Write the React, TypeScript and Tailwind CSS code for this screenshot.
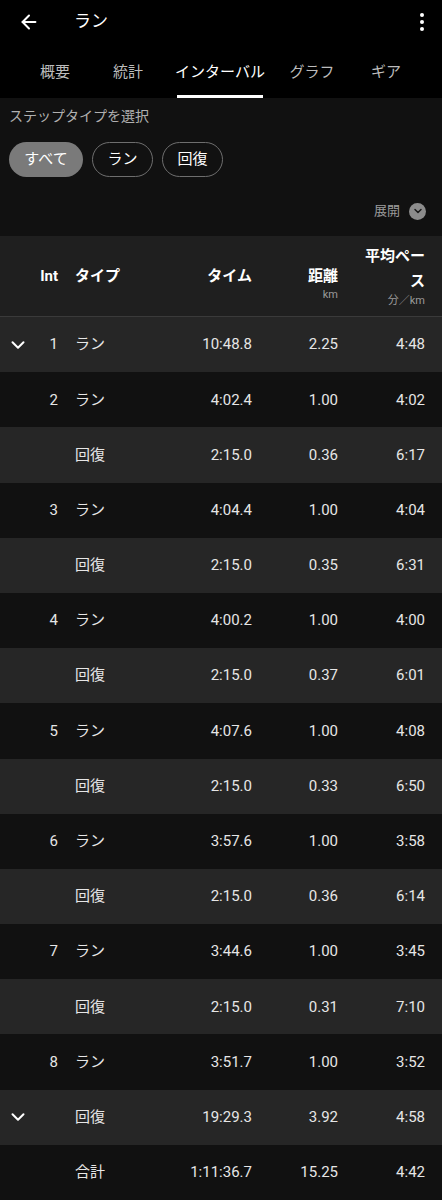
import { ArrowLeft, ChevronDown } from "lucide-react";

type Row = {
  int?: string;
  type: string;
  time: string;
  dist: string;
  pace: string;
  chevron?: boolean;
  light?: boolean;
};

const rows: Row[] = [
  { int: "1", type: "ラン", time: "10:48.8", dist: "2.25", pace: "4:48", chevron: true, light: true },
  { int: "2", type: "ラン", time: "4:02.4", dist: "1.00", pace: "4:02" },
  { type: "回復", time: "2:15.0", dist: "0.36", pace: "6:17", light: true },
  { int: "3", type: "ラン", time: "4:04.4", dist: "1.00", pace: "4:04" },
  { type: "回復", time: "2:15.0", dist: "0.35", pace: "6:31", light: true },
  { int: "4", type: "ラン", time: "4:00.2", dist: "1.00", pace: "4:00" },
  { type: "回復", time: "2:15.0", dist: "0.37", pace: "6:01", light: true },
  { int: "5", type: "ラン", time: "4:07.6", dist: "1.00", pace: "4:08" },
  { type: "回復", time: "2:15.0", dist: "0.33", pace: "6:50", light: true },
  { int: "6", type: "ラン", time: "3:57.6", dist: "1.00", pace: "3:58" },
  { type: "回復", time: "2:15.0", dist: "0.36", pace: "6:14", light: true },
  { int: "7", type: "ラン", time: "3:44.6", dist: "1.00", pace: "3:45" },
  { type: "回復", time: "2:15.0", dist: "0.31", pace: "7:10", light: true },
  { int: "8", type: "ラン", time: "3:51.7", dist: "1.00", pace: "3:52" },
  { type: "回復", time: "19:29.3", dist: "3.92", pace: "4:58", chevron: true, light: true },
  { type: "合計", time: "1:11:36.7", dist: "15.25", pace: "4:42" },
];

const tabs = [
  { label: "概要", w: "w-[74px]" },
  { label: "統計", w: "w-[72px]" },
  { label: "インターバル", w: "w-[112px]", active: true },
  { label: "グラフ", w: "w-[72px]" },
  { label: "ギア", w: "w-[76px]" },
];

function DataRow({ r }: { r: Row }) {
  return (
    <div
      className={`flex h-[55.2px] items-center text-[15px] text-[#e6e6e6] ${
        r.light ? "bg-[#262626]" : "bg-[#111111]"
      }`}
    >
      <div className="flex w-[36px] justify-center">
        {r.chevron && <ChevronDown size={22} strokeWidth={2.2} className="text-white" />}
      </div>
      <div className="w-[22px] text-right">{r.int}</div>
      <div className="ml-[17px] w-[80px]">{r.type}</div>
      <div className="w-[97px] text-right">{r.time}</div>
      <div className="w-[86px] text-right">{r.dist}</div>
      <div className="w-[87px] text-right">{r.pace}</div>
    </div>
  );
}

export default function App() {
  return (
    <div
      className="w-[442px] bg-[#111111] text-white"
      style={{ fontFamily: "Roboto, 'Noto Sans CJK JP', sans-serif" }}
    >
      {/* App bar */}
      <div className="flex h-[42px] items-center bg-black pl-[18px] pr-[12px] pt-[2px]">
        <ArrowLeft size={22} strokeWidth={2.2} className="text-white" />
        <span className="ml-[34px] text-[17px]">ラン</span>
        <div className="ml-auto flex flex-col items-center gap-[3px] px-[6px]">
          <span className="h-[4px] w-[4px] rounded-sm bg-white" />
          <span className="h-[4px] w-[4px] rounded-sm bg-white" />
          <span className="h-[4px] w-[4px] rounded-sm bg-white" />
        </div>
      </div>

      {/* Tabs */}
      <div className="flex h-[56px] bg-black pl-[18px]">
        {tabs.map((t) => (
          <div key={t.label} className={`flex flex-col items-center justify-end ${t.w}`}>
            <span
              className={`mb-[12px] whitespace-nowrap text-[15px] ${
                t.active ? "text-white" : "text-[#bcbcbc]"
              }`}
            >
              {t.label}
            </span>
            <span className={`h-[3px] w-[86px] ${t.active ? "bg-white" : "bg-transparent"}`} />
          </div>
        ))}
      </div>

      {/* Filter */}
      <div className="px-[9px] pt-[8px]">
        <div className="text-[14px] leading-[20px] text-[#b0b0b0]">ステップタイプを選択</div>
        <div className="mt-[16px] flex gap-[9px]">
          <span className="flex h-[35px] w-[74px] items-center justify-center rounded-full bg-[#7a7a7a] text-[15px]">
            すべて
          </span>
          <span className="flex h-[35px] w-[61px] items-center justify-center rounded-full border border-[#6e6e6e] text-[15px]">
            ラン
          </span>
          <span className="flex h-[35px] w-[61px] items-center justify-center rounded-full border border-[#6e6e6e] text-[15px]">
            回復
          </span>
        </div>
        <div className="flex h-[59px] items-center justify-end pr-[7px] pt-[9px]">
          <span className="text-[13px] text-[#9c9c9c]">展開</span>
          <span className="ml-[9px] flex h-[17px] w-[17px] items-center justify-center rounded-full bg-[#8c8c8c]">
            <ChevronDown size={12} strokeWidth={3} className="text-[#1a1a1a]" />
          </span>
        </div>
      </div>

      {/* Table header */}
      <div className="flex h-[81px] items-center border-b border-[#3a3a3a] bg-[#1f1f1f] text-[15px] font-bold">
        <div className="w-[36px]" />
        <div className="w-[22px] text-right">Int</div>
        <div className="ml-[17px] w-[80px]">タイプ</div>
        <div className="w-[97px] text-right">タイム</div>
        <div className="flex w-[86px] flex-col items-end pt-[16px]">
          <span>距離</span>
          <span className="text-[11px] font-normal leading-[16px] text-[#9a9a9a]">km</span>
        </div>
        <div className="flex w-[87px] flex-col items-end">
          <span className="w-[66px] text-right leading-[25px]">平均ペース</span>
          <span className="text-[11px] font-normal leading-[14px] text-[#9a9a9a]">分／km</span>
        </div>
      </div>

      {rows.map((r, i) => (
        <DataRow key={i} r={r} />
      ))}
      <div className="h-[55px] border-t border-[#3a3a3a] bg-[#111111]" />
    </div>
  );
}
